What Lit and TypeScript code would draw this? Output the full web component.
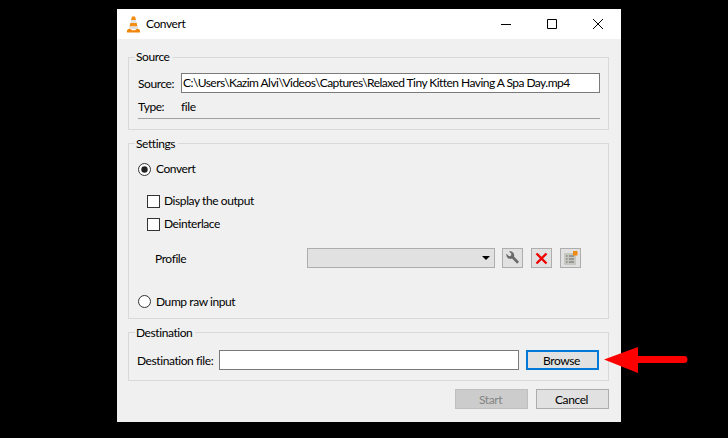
import { LitElement, html, css } from "lit";
import { customElement } from "lit/decorators.js";

@customElement("app-root")
export class AppRoot extends LitElement {
  static styles = css`
    :host {
      display: block;
      box-sizing: border-box;
      width: 728px;
      height: 438px;
      padding: 9px 107px 16px 117px;
      background: #000;
      position: relative;
      overflow: hidden;
      font: 12px Lato, "Noto Sans", sans-serif;
      letter-spacing: -0.42px;
      color: #000;
      white-space: nowrap;
    }
    .win {
      width: 504px;
      height: 413px;
      background: #f0f0f0;
      display: flex;
      flex-direction: column;
    }
    .title {
      height: 30px;
      background: #fff;
      display: flex;
      align-items: center;
      padding-left: 9px;
      flex: none;
    }
    .title .cone { width: 15px; height: 17px; margin-right: 5px; }
    .title .name { flex: 1; padding-bottom: 2px; }
    .title .wb { width: 46px; height: 30px; display: flex; align-items: center; justify-content: center; }
    .title .wb svg { width: 12px; height: 12px; }
    .body { padding: 10px 12px 0 11px; display: flex; flex-direction: column; }
    fieldset {
      margin: 0;
      padding: 0;
      min-width: 0;
      border: 1px solid #d9d9d9;
      display: block;
    }
    legend { margin-left: 6px; padding: 0 3px 0 1px; line-height: 16px; height: 16px; }
    .set legend, .dst legend { line-height: 18px; }
    .src { height: 81px; box-sizing: border-box; }
    .row { display: flex; align-items: center; }
    .up { padding-bottom: 2px; }
    .src .r1 { margin: 8px 0 0 9px; }
    .src .lab { width: 43px; }
    .field {
      background: #fff;
      border: 1px solid #7a7a7a;
      box-sizing: border-box;
      height: 20px;
      line-height: 18px;
      padding-left: 1px;
      overflow: hidden;
      letter-spacing: -0.54px;
    }
    .src .field { width: 419px; }
    .src .r2 { margin: 4px 0 0 9px; height: 20px; }
    .sep { height: 1px; background: #a0a0a0; margin: 1px 8px 0 9px; }
    .set { margin-top: 5px; height: 184px; box-sizing: border-box; display: flex; flex-direction: column; }
    .radio { width: 13px; height: 13px; flex: none; margin-right: 5px; }
    .box {
      width: 13px; height: 13px; border: 1px solid #333; background: #fff; box-sizing: border-box; flex: none; margin-right: 4px;
    }
    .set .a { margin: 10px 0 0 9px; height: 16px; }
    .set .b { margin: 16px 0 0 18px; height: 16px; }
    .set .c { margin: 7px 0 0 18px; height: 16px; }
    .set .prof { margin: 16px 0 0 26px; height: 21px; align-items: flex-start; }
    .prof .plab { width: 152px; line-height: 22px; }
    .combo {
      width: 188px; height: 20px; box-sizing: border-box; background: #e1e1e1; border: 1px solid #adadad;
      display: flex; align-items: center; justify-content: flex-end; padding-right: 4px; margin-right: 7px;
    }
    .combo i { width: 0; height: 0; border: 4px solid transparent; border-top: 4px solid #000; border-bottom: 0; display: block; }
    .ib {
      width: 21px; height: 20px; box-sizing: border-box; border: 1px solid #adadad; background: #e1e1e1; margin-right: 8px;
      display: flex; align-items: center; justify-content: center;
    }
    .ib svg { width: 17px; height: 17px; display: block; }
    .set .d { margin: 24px 0 0 9px; height: 16px; }
    .dst { margin-top: 5px; height: 57px; box-sizing: border-box; }
    .dst .row { margin: 10px 0 0 8px; }
    .dst .lab { width: 82px; }
    .dst .field { width: 300px; margin-right: 7px; }
    .btn {
      width: 73px; height: 20px; box-sizing: border-box; border: 1px solid #adadad; background: #e1e1e1;
      display: flex; align-items: center; justify-content: center; padding-right: 2px;
    }
    .btn.focus { border: 2px solid #0078d7; }
    .foot { display: flex; justify-content: flex-end; gap: 8px; margin-top: 8px; }
    .btn.off { background: #cccccc; border-color: #bfbfbf; color: #838383; }
    .arrow { position: absolute; left: 604px; top: 346px; width: 84px; height: 28px; }
  `;

  render() {
    return html`
      <div class="win">
        <div class="title">
          <svg class="cone" viewBox="0 0 15 17">
            <path d="M6 0.5h3l1 3.5H5z" fill="#f08a10"/>
            <path d="M5 4h5l0.7 3H4.300z" fill="#e4e4e4"/>
            <path d="M4.300 7h6.400l0.800 3.500H3.500z" fill="#f28c12"/>
            <path d="M3.500 10.500h8l0.600 2.500H2.900z" fill="#dedede"/>
            <path d="M2.400 13h2l1.500 1.200h3.200L10.600 13h2l1.400 1.200V16.500H1V14.200z" fill="#f0860a"/>
          </svg>
          <span class="name">Convert</span>
          <div class="wb"><svg viewBox="0 0 12 12"><path d="M1 6.500h10" stroke="#000" fill="none"/></svg></div>
          <div class="wb"><svg viewBox="0 0 12 12"><path d="M1.500 1.500h9v9h-9z" stroke="#000" fill="none"/></svg></div>
          <div class="wb"><svg viewBox="0 0 12 12"><path d="M1 1l10 10M11 1L1 11" stroke="#000" fill="none"/></svg></div>
        </div>
        <div class="body">
          <fieldset class="src">
            <legend>Source</legend>
            <div class="row r1"><span class="lab">Source:</span><div class="field">C:\\Users\\Kazim Alvi\\Videos\\Captures\\Relaxed Tiny Kitten Having A Spa Day.mp4</div></div>
            <div class="row r2"><span class="lab up">Type:</span><span class="up">file</span></div>
            <div class="sep"></div>
          </fieldset>
          <fieldset class="set">
            <legend>Settings</legend>
            <div class="row a">
              <svg class="radio" viewBox="0 0 13 13"><circle cx="6.500" cy="6.500" r="6" fill="#fff" stroke="#333"/><circle cx="6.500" cy="6.500" r="3.200" fill="#222"/></svg>
              <span class="up">Convert</span>
            </div>
            <div class="row b"><span class="box"></span><span class="up">Display the output</span></div>
            <div class="row c"><span class="box"></span><span class="up">Deinterlace</span></div>
            <div class="row prof">
              <span class="plab">Profile</span>
              <div class="combo"><i></i></div>
              <div class="ib"><svg viewBox="0 0 17 17"><path d="M2.500 3.800L5 6.200 7 5.700 7.400 3.700 5 1.500A4 4 0 0 1 10 6.500L15 11.800 13.200 13.800 8 8.500A4 4 0 0 1 2.500 3.800z" fill="#6a6a6a"/></svg></div>
              <div class="ib"><svg viewBox="0 0 17 17"><path d="M3.500 3.500l10 10M13.500 3.500l-10 10" stroke="#f00000" stroke-width="2.400" fill="none"/></svg></div>
              <div class="ib"><svg viewBox="0 0 17 17"><rect x="2" y="3" width="12" height="12" rx="1" fill="#c6c6c0"/><path d="M4 6h1.500M7 6h5M4 9h1.500M7 9h5M4 12h1.500M7 12h5" stroke="#666" fill="none"/><rect x="11" y="1" width="4.500" height="4.500" fill="#f08a10"/></svg></div>
            </div>
            <div class="row d">
              <svg class="radio" viewBox="0 0 13 13"><circle cx="6.500" cy="6.500" r="6" fill="#fff" stroke="#333"/></svg>
              <span>Dump raw input</span>
            </div>
          </fieldset>
          <fieldset class="dst">
            <legend>Destination</legend>
            <div class="row">
              <span class="lab">Destination file:</span>
              <div class="field"></div>
              <div class="btn focus">Browse</div>
            </div>
          </fieldset>
          <div class="foot">
            <div class="btn off">Start</div>
            <div class="btn">Cancel</div>
          </div>
        </div>
      </div>
      <svg class="arrow" viewBox="0 0 84 28">
        <path d="M0 13.500L34 1V10H80a3.500 3.500 0 0 1 0 7H34V27z" fill="#f00"/>
      </svg>
    `;
  }
}
